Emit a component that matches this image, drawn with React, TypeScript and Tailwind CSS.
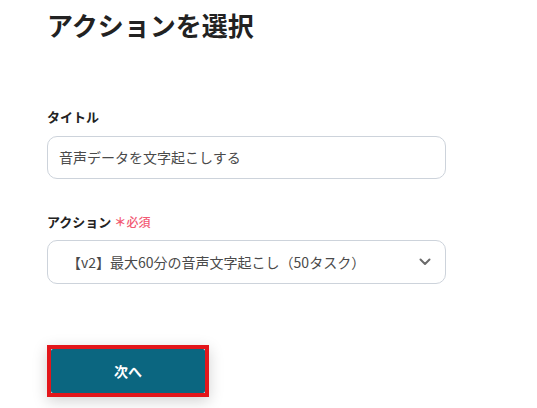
export default function App() {
  return (
    <div
      className="w-full h-[408px] bg-white overflow-hidden pl-[47px]"
      style={{ fontFamily: '"Noto Sans CJK JP", "Noto Sans", sans-serif' }}
    >
      <h1 className="mt-[8px] text-[26px] leading-[34px] font-bold text-[#222]">
        アクションを選択
      </h1>

      <div className="mt-[65px] w-[399px]">
        <label className="block text-[13px] leading-[20px] font-bold text-[#222]">
          タイトル
        </label>
        <div className="mt-[9px] h-[43px] rounded-[10px] border border-[#cdd3db] flex items-center px-[11px] text-[14px] text-[#4a4a4a]">
          音声データを文字起こしする
        </div>
      </div>

      <div className="mt-[33px] w-[399px]">
        <label className="flex items-center text-[13px] leading-[20px] font-bold text-[#222]">
          アクション
          <span className="ml-[3px] text-[#f25a73] text-[12px] font-bold">＊</span>
          <span className="text-[#f25a73] text-[12px] font-medium">必須</span>
        </label>
        <div className="mt-[8px] h-[44px] rounded-[10px] border border-[#cdd3db] flex items-center justify-between pl-[19px] pr-[14px] text-[14px] text-[#4a4a4a]">
          <span>【v2】最大60分の音声文字起こし（50タスク）</span>
          <svg width="12" height="8" viewBox="0 0 12 8" fill="none">
            <path d="M1.5 1.5 L6 6 L10.5 1.5" stroke="#6b6b6b" strokeWidth="2" strokeLinecap="round" strokeLinejoin="round" />
          </svg>
        </div>
      </div>

      <div className="mt-[61px] w-[162px] h-[52px] border-[4px] border-[#e3161b] shadow-[0_4px_14px_rgba(0,0,0,0.18)]">
        <button className="w-full h-full bg-[#0b6680] rounded-[2px] text-white text-[14px] font-bold">
          次へ
        </button>
      </div>
    </div>
  );
}
